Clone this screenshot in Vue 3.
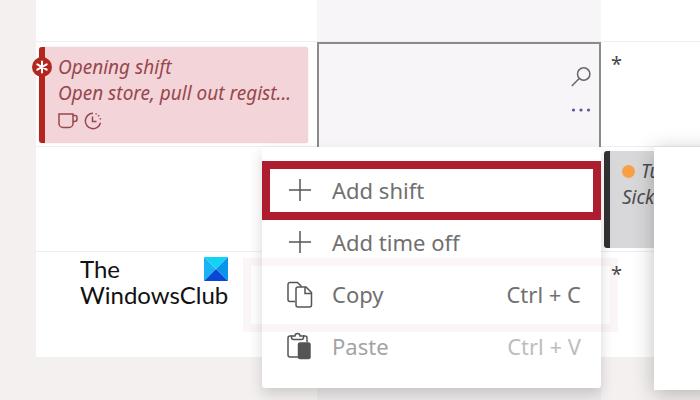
<template>
    <main class="schedule">
        <div class="board">
            <div class="cell"></div>
            <div class="cell is-active"></div>
            <div class="cell"></div>

            <div class="cell">
                <article class="shift">
                    <span class="badge">
                        <svg viewBox="0 0 20 20" width="20" height="20">
                            <path d="M10 4.6v10.8M5.3 7.3l9.4 5.4M14.7 7.3l-9.4 5.4" />
                        </svg>
                    </span>
                    <p>Opening shift</p>
                    <p>Open store, pull out regist...</p>
                    <div class="shift-icons">
                        <svg viewBox="0 0 20 18" width="20" height="18">
                            <path d="M1 2h14v9.5a4 4 0 0 1-4 4H5a4 4 0 0 1-4-4z" />
                            <path d="M15 3.5h2.2A1.8 1.8 0 0 1 19 5.3V7a2.5 2.5 0 0 1-2.5 2.5H15" />
                        </svg>
                        <svg viewBox="0 0 18 18" width="18" height="18">
                            <path d="M9 1.3a7.7 7.7 0 1 0 7.5 9.5" />
                            <path d="M8.5 4.5v5h4" />
                            <path d="M11.5 1.6l1.2.5M14.2 3.3l.9 1M16.2 6.3l.4 1.2" />
                        </svg>
                    </div>
                </article>
            </div>
            <div class="cell is-active is-selected">
                <button class="tool" aria-label="Search">
                    <svg viewBox="0 0 20 20" width="20" height="20">
                        <circle cx="12.7" cy="7" r="6.2" />
                        <path d="M8.2 11.5L.8 19" />
                    </svg>
                </button>
                <button class="tool more" aria-label="More options">
                    <svg viewBox="0 0 20 6" width="20" height="6">
                        <circle cx="2.5" cy="3" r="1.6" />
                        <circle cx="10" cy="3" r="1.6" />
                        <circle cx="17.5" cy="3" r="1.6" />
                    </svg>
                </button>
            </div>
            <div class="cell note">*</div>

            <div class="cell"></div>
            <div class="cell is-active"></div>
            <div class="cell">
                <article class="time-off">
                    <p><span class="dot"></span>Tu</p>
                    <p>Sick</p>
                </article>
            </div>

            <div class="cell">
                <div class="logo">
                    <span>The</span>
                    <svg viewBox="0 0 24 24" width="24" height="24">
                        <path fill="#12d3f5" d="M0 0h24L12 12z" />
                        <path fill="#18b4f2" d="M0 0v24l12-12z" />
                        <path fill="#0a93ea" d="M24 0v24L12 12z" />
                        <path fill="#0a46d8" d="M0 24h24L12 12z" />
                    </svg>
                    <span class="logo-name">WindowsClub</span>
                </div>
            </div>
            <div class="cell is-active"></div>
            <div class="cell note">*</div>
        </div>
        <div class="footer"></div>

        <aside class="panel"></aside>

        <div class="menu" role="menu">
            <button
                v-for="item in items"
                :key="item.title"
                class="menu-item"
                :class="item.state"
                :disabled="item.state === 'is-disabled'"
                role="menuitem"
            >
                <svg viewBox="0 0 28 28" width="28" height="28">
                    <path v-if="item.icon === 'add'" d="M14 3v22M3 14h22" />
                    <template v-else-if="item.icon === 'copy'">
                        <path d="M9 21.500H4a2 2 0 0 1-2-2v-15a2 2 0 0 1 2-2h7.500l4 4" />
                        <path d="M12 7h8l5.500 5.500V25a2 2 0 0 1-2 2H12a2 2 0 0 1-2-2V9a2 2 0 0 1 2-2z" />
                        <path d="M19 7v6.500h6" />
                    </template>
                    <template v-else>
                        <path d="M12 25H4a2 2 0 0 1-2-2V6a2 2 0 0 1 2-2h2M17 4h2a2 2 0 0 1 2 2v4" />
                        <path d="M5.5 4H9a2.500 2.500 0 0 1 5 0h3.500v1.500a2 2 0 0 1-2 2h-8a2 2 0 0 1-2-2z" />
                        <rect class="solid" x="12.5" y="11" width="11.5" height="15.5" rx="1.5" />
                    </template>
                </svg>
                <span>{{ item.title }}</span>
                <kbd v-if="item.keys">{{ item.keys }}</kbd>
            </button>
        </div>
    </main>
</template>

<script setup>
const items = [
    { title: 'Add shift', icon: 'add', state: 'is-marked' },
    { title: 'Add time off', icon: 'add', state: '' },
    { title: 'Copy', icon: 'copy', keys: 'Ctrl + C', state: 'is-hinted' },
    { title: 'Paste', icon: 'paste', keys: 'Ctrl + V', state: 'is-disabled' },
];
</script>

<style>
body {
    margin: 0;
    background: #f3f0ef;
}
</style>

<style scoped>
.schedule {
    box-sizing: border-box;
    display: flex;
    flex-direction: column;
    min-height: 100vh;
    overflow: hidden;
    padding-left: 36px;
    position: relative;
    font-family: "Noto Sans", "Open Sans", sans-serif;
}

p {
    margin: 0;
}

button {
    background: transparent;
    border: 0;
    font: inherit;
    padding: 0;
}

svg {
    display: block;
    fill: none;
    flex: none;
    stroke: currentColor;
    stroke-width: 1.5;
}

/* Board */
.board {
    display: grid;
    grid-template-columns: 281px 284px 1fr;
    grid-template-rows: 42px repeat(3, 105px);
}

.cell {
    background: #fff;
    border-bottom: 1px solid #efedef;
    box-sizing: border-box;
    min-width: 0;
}

.cell:nth-last-child(-n + 3) {
    border-bottom: 0;
}

.cell.is-active {
    background: #f7f5f8;
}

.cell.is-selected {
    align-items: flex-end;
    border: 2px solid #8b8b8b;
    border-bottom: 0;
    display: flex;
    flex-direction: column;
    gap: 20px;
    padding: 23px 8px 0 0;
}

.tool {
    color: #666;
}

.more {
    color: #5b5794;
}

.more svg {
    fill: currentColor;
    stroke: none;
}

.cell.note {
    color: #444;
    font-size: 20px;
    line-height: 24px;
    padding: 10px;
}

/* Cards */
.shift {
    background: #f2d4d9;
    border-left: 6px solid #b3261e;
    border-radius: 3px;
    box-shadow: 0 0 1px #d8a8b0;
    box-sizing: border-box;
    color: #97474c;
    font-size: 19px;
    font-style: italic;
    height: 96px;
    line-height: 26px;
    margin: 5px 9px 0 3px;
    padding: 7px 0 0 13px;
    position: relative;
    white-space: nowrap;
}

.badge {
    background: #b3261e;
    border-radius: 50%;
    color: #fff;
    left: -13px;
    position: absolute;
    top: 10px;
}

.badge svg {
    stroke-linecap: round;
    stroke-width: 2;
}

.shift-icons {
    display: flex;
    gap: 6px;
    padding-top: 6px;
}

.time-off {
    background: #d8d7d9;
    border-left: 6px solid #323133;
    border-radius: 3px;
    box-sizing: border-box;
    color: #4d4c4e;
    font-size: 19px;
    font-style: italic;
    height: 97px;
    line-height: 26px;
    margin: 4px 0 0 3px;
    padding: 7px 0 0 12px;
    white-space: nowrap;
}

.dot {
    background: #fb9f45;
    border-radius: 50%;
    display: inline-block;
    height: 13px;
    margin-right: 6px;
    width: 13px;
}

/* Logo */
.logo {
    align-items: center;
    color: #111;
    display: grid;
    font-family: Lato, "Open Sans", sans-serif;
    font-size: 24px;
    grid-template-columns: 124px 24px;
    line-height: 26px;
    padding: 4px 0 0 44px;
}

.logo svg {
    stroke: none;
}

.logo-name {
    grid-column: span 2;
}

.footer {
    background: linear-gradient(#ebe9e9, #ebe9e9) 281px 0 / 284px 100% no-repeat;
    flex: 1;
}

/* Side panel */
.panel {
    background: #fff;
    box-shadow: 0 4px 20px rgba(0, 0, 0, 0.25);
    height: 243px;
    left: 654px;
    position: absolute;
    right: -20px;
    top: 147px;
}

/* Context menu */
.menu {
    background: #fff;
    border-radius: 3px;
    box-shadow: 0 6px 14px rgba(0, 0, 0, 0.16);
    box-sizing: border-box;
    left: 262px;
    padding: 17px 0 16px;
    position: absolute;
    top: 147px;
    width: 339px;
}

.menu-item {
    align-items: center;
    box-sizing: border-box;
    color: #707070;
    display: flex;
    font-size: 22px;
    gap: 18px;
    height: 52px;
    line-height: 28px;
    padding: 0 20px 0 24px;
    position: relative;
    text-align: left;
    width: 100%;
}

.menu-item svg {
    color: #555;
}

.menu-item kbd {
    font: inherit;
    margin-left: auto;
}

.menu-item .solid {
    fill: currentColor;
}

.menu-item.is-disabled {
    color: #a3a3a3;
}

.is-disabled kbd {
    color: #bdbdbd;
}

.is-marked::after {
    border: 8px solid #ad1c2f;
    content: "";
    inset: -3px 0 -4px;
    position: absolute;
}

.is-hinted::after {
    border: 8px solid rgba(200, 130, 165, 0.08);
    content: "";
    inset: -10px -17px -12px -19px;
    position: absolute;
}
</style>
